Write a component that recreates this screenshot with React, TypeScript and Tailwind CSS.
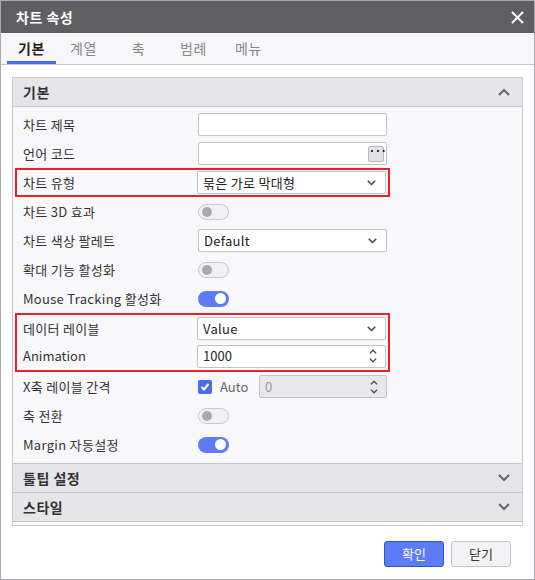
const F = { fontFamily: '"Noto Sans CJK KR", "Noto Sans", sans-serif' }

function Chevron({ up = false, cls = "" }: { up?: boolean; cls?: string }) {
  return (
    <svg width="12" height="8" viewBox="0 0 12 8" className={cls}>
      <path d={up ? "M1 7 L6 2 L11 7" : "M1 1 L6 6 L11 1"} fill="none" stroke="currentColor" strokeWidth="2" />
    </svg>
  )
}

function Toggle({ on }: { on: boolean }) {
  return on ? (
    <div className="w-[31px] h-[16px] rounded-full bg-[#5b7cf5] flex items-center justify-end pr-[3px]">
      <div className="w-[11px] h-[11px] rounded-full bg-white" />
    </div>
  ) : (
    <div className="w-[31px] h-[16px] rounded-full bg-[#f1f1f3] border border-[#c8c8cc] flex items-center pl-[3px]">
      <div className="w-[10px] h-[10px] rounded-full bg-[#a9a9ad]" />
    </div>
  )
}

function Select({ v }: { v: string }) {
  return (
    <div className="w-[189px] h-[23px] bg-white border border-[#c4c4c8] rounded-[2px] flex items-center justify-between pl-[5px] pr-[9px] text-[13px] text-[#222] tracking-[0.3px]">
      <span>{v}</span>
      <Chevron cls="w-[9px] h-[6px] text-[#444]" />
    </div>
  )
}

function Spin({ v, disabled = false, w = 189 }: { v: string; disabled?: boolean; w?: number }) {
  return (
    <div
      style={{ width: w }}
      className={`h-[23px] border border-[#c4c4c8] rounded-[2px] flex items-center justify-between pl-[5px] pr-[8px] text-[13px] ${disabled ? "bg-[#e8e8eb] text-[#999]" : "bg-white text-[#222]"}`}
    >
      <span>{v}</span>
      <div className="flex flex-col gap-[4px] text-[#444]">
        <Chevron up cls="w-[8px] h-[5px]" />
        <Chevron cls="w-[8px] h-[5px]" />
      </div>
    </div>
  )
}

function Row({ label, children }: { label: string; children?: React.ReactNode }) {
  return (
    <div className="h-[29px] flex items-center">
      <div className="w-[182px] pl-[7px] text-[13px] text-[#333] tracking-[0.3px]">{label}</div>
      {children}
    </div>
  )
}

function SectionHead({ title, open = false }: { title: string; open?: boolean }) {
  return (
    <div className="h-[29px] bg-[#e6e6ea] border-b border-[#c8c8cc] flex items-center justify-between pl-[10px] pr-[12px]">
      <span className="text-[14px] font-bold text-[#333] tracking-[0.5px]">{title}</span>
      <Chevron up={open} cls="text-[#666]" />
    </div>
  )
}

export default function App() {
  return (
    <div style={F} className="w-[535px] h-[580px] bg-white border border-[#a9a9ad] flex flex-col">
      <div className="h-[35px] bg-[#5f5f62] flex items-center justify-between pl-[15px] pr-[10px]">
        <span className="text-white font-bold text-[14px] tracking-[0.5px]">차트 속성</span>
        <svg width="13" height="13" viewBox="0 0 13 13">
          <path d="M1 1 L12 12 M12 1 L1 12" stroke="white" strokeWidth="2" />
        </svg>
      </div>
      <div className="h-[34px] bg-[#f7f7f9] border-b border-[#c8c8cc] flex pl-[6px] text-[14px] tracking-[0.5px]">
        <div className="w-[49px] flex items-center justify-center font-bold text-[#222] border-b-[3px] border-[#4a6cf0] pt-[3px]">기본</div>
        {["계열", "축", "범례", "메뉴"].map((t) => (
          <div key={t} className="w-[55px] flex items-center justify-center text-[#888]">{t}</div>
        ))}
      </div>
      <div className="flex-1 px-[11px] pt-[12px]">
        <div className="border border-[#c8c8cc] bg-[#f8f8fa]">
          <SectionHead title="기본" open />
          <div className="pl-[3px] pt-[3px] pb-[4px]">
            <Row label="차트 제목">
              <div className="w-[189px] h-[23px] bg-white border border-[#c4c4c8] rounded-[2px]" />
            </Row>
            <Row label="언어 코드">
              <div className="w-[189px] h-[23px] bg-white border border-[#c4c4c8] rounded-[2px] flex justify-end items-center pr-[2px]">
                <div className="w-[16px] h-[16px] bg-[#e2e2e6] border border-[#bbb] rounded-[2px] text-[10px] leading-[8px] text-center font-bold">···</div>
              </div>
            </Row>
            <div className="border-2 border-[#e8202a] w-[375px] -ml-[1px]">
              <div className="h-[25px] flex items-center">
                <div className="w-[180px] pl-[6px] text-[13px] text-[#333] tracking-[0.3px]">차트 유형</div>
                <Select v="묶은 가로 막대형" />
              </div>
            </div>
            <Row label="차트 3D 효과"><Toggle on={false} /></Row>
            <Row label="차트 색상 팔레트"><Select v="Default" /></Row>
            <Row label="확대 기능 활성화"><Toggle on={false} /></Row>
            <Row label="Mouse Tracking 활성화"><Toggle on /></Row>
            <div className="border-2 border-[#e8202a] w-[375px] -ml-[1px]">
              <div className="h-[27px] flex items-center">
                <div className="w-[180px] pl-[6px] text-[13px] text-[#333] tracking-[0.3px]">데이터 레이블</div>
                <Select v="Value" />
              </div>
              <div className="h-[28px] flex items-center">
                <div className="w-[180px] pl-[6px] text-[13px] text-[#333]">Animation</div>
                <Spin v="1000" />
              </div>
            </div>
            <Row label="X축 레이블 간격">
              <div className="flex items-center">
                <div className="w-[14px] h-[14px] bg-[#4a6cf0] rounded-[2px] flex items-center justify-center">
                  <svg width="10" height="10" viewBox="0 0 10 10"><path d="M1.5 5 L4 7.5 L8.5 2" fill="none" stroke="white" strokeWidth="2" /></svg>
                </div>
                <span className="ml-[8px] text-[13px] text-[#666] w-[39px]">Auto</span>
                <Spin v="0" disabled w={128} />
              </div>
            </Row>
            <Row label="축 전환"><Toggle on={false} /></Row>
            <Row label="Margin 자동설정"><Toggle on /></Row>
          </div>
          <div className="border-t border-[#c8c8cc]">
            <SectionHead title="툴팁 설정" />
            <SectionHead title="스타일" />
          </div>
          <div className="h-[3px] bg-white" />
        </div>
      </div>
      <div className="h-[56px] flex items-start justify-end gap-[7px] pr-[23px] pt-[15px] text-[13px]">
        <button className="w-[60px] h-[26px] rounded-[3px] bg-[#5b7cf5] border border-[#3452c8] text-white">확인</button>
        <button className="w-[60px] h-[26px] rounded-[3px] bg-[#f3f3f5] border border-[#c4c4c8] text-[#333]">닫기</button>
      </div>
    </div>
  )
}
